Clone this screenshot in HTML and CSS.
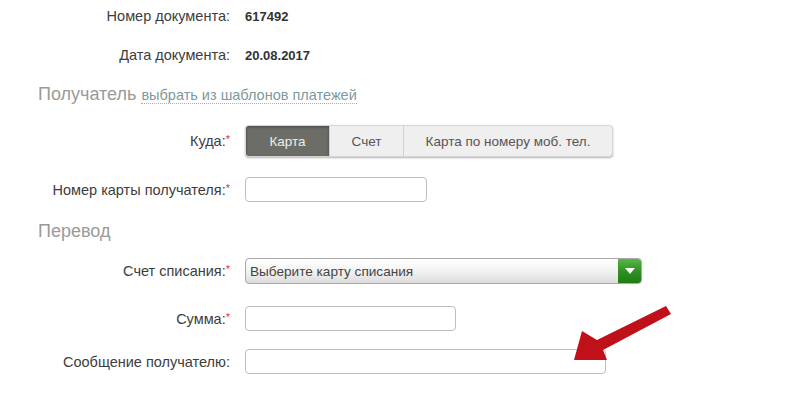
FILE: index.html
```html
<!DOCTYPE html>
<html lang="ru">
<head>
<meta charset="utf-8">
<title>Перевод</title>
<link rel="stylesheet" href="styles.css">
</head>
<body>
<div class="form">
  <div class="row r1">
    <div class="label">Номер документа:</div>
    <div class="value">617492</div>
  </div>
  <div class="row r2">
    <div class="label">Дата документа:</div>
    <div class="value">20.08.2017</div>
  </div>
  <div class="heading h1">Получатель <a class="tpl">выбрать из шаблонов платежей</a></div>
  <div class="row r3">
    <div class="label">Куда:<span class="req">*</span></div>
    <div class="seg">
      <span class="seg-item active s1">Карта</span>
      <span class="seg-item s2">Счет</span>
      <span class="seg-item s3">Карта по номеру моб. тел.</span>
    </div>
  </div>
  <div class="row r4">
    <div class="label">Номер карты получателя:<span class="req">*</span></div>
    <div class="input w-card"></div>
  </div>
  <div class="heading h2">Перевод</div>
  <div class="row r5">
    <div class="label">Счет списания:<span class="req">*</span></div>
    <div class="select">
      <span class="select-text">Выберите карту списания</span>
      <span class="select-btn"><svg width="10" height="6" viewBox="0 0 10 6"><path d="M0 0 H10 L5 6 Z" fill="#fff"/></svg></span>
    </div>
  </div>
  <div class="row r6">
    <div class="label">Сумма:<span class="req">*</span></div>
    <div class="input w-sum"></div>
  </div>
  <div class="row r7">
    <div class="label">Сообщение получателю:</div>
    <div class="input w-msg"></div>
  </div>
</div>
<svg class="arrow" width="120" height="75" viewBox="0 0 120 75">
  <polygon points="14,65 22,36 37,45 106,11 111,19 43,55 47,65" fill="#c0111a"/>
</svg>
</body>
</html>
```
FILE: styles.css
```css
html, body {
  margin: 0;
  padding: 0;
  background: #fff;
}
body {
  font-family: "Liberation Sans", Arial, sans-serif;
  color: #444;
  width: 800px;
  height: 400px;
  overflow: hidden;
  position: relative;
}
.form {
  display: flex;
  flex-direction: column;
}
.row {
  display: flex;
  align-items: center;
}
.label {
  width: 230px;
  flex: none;
  text-align: right;
  font-size: 14.5px;
  color: #3d3d3d;
  margin-right: 15px;
}
.req {
  color: #d9303a;
  font-size: 11px;
  vertical-align: 3px;
}
.value {
  font-size: 13px;
  font-weight: bold;
  color: #333;
}
.r1 { height: 32px; }
.r2 { height: 32px; margin-top: 7px; }
.heading {
  height: 24px;
  display: flex;
  align-items: center;
  padding-left: 38px;
  font-size: 18px;
  color: #9a9a9a;
}
.h1 { margin-top: 11px; }
.tpl {
  font-size: 14.5px;
  color: #7d9a9e;
  margin-left: 5px;
  border-bottom: 1px dotted #9ab3b6;
  line-height: 15px;
  margin-top: 3px;
}
.r3 { height: 32px; margin-top: 19px; }
.seg {
  display: flex;
  height: 32px;
  border-radius: 4px;
  background: #efefef;
  box-shadow: 0 1px 2px rgba(0,0,0,0.3);
  overflow: hidden;
  border: 1px solid #d6d6d6;
  box-sizing: border-box;
}
.seg-item {
  display: flex;
  align-items: center;
  justify-content: center;
  font-size: 13.5px;
  color: #555;
  border-left: 1px solid #d0d0d0;
}
.seg-item.active {
  background: #6d6d67;
  color: #eee;
  border-left: none;
  box-shadow: inset 0 1px 3px rgba(0,0,0,0.35);
}
.s1 { width: 83px; }
.s2 { width: 73px; }
.s3 { width: 208px; }
.r4 { height: 25px; margin-top: 20px; }
.input {
  height: 25px;
  box-sizing: border-box;
  border: 1px solid #b8c0c4;
  border-radius: 4px;
  background: #fff;
}
.w-card { width: 182px; }
.h2 { margin-top: 17px; }
.r5 { height: 26px; margin-top: 15px; }
.select {
  width: 397px;
  height: 26px;
  box-sizing: border-box;
  border: 1px solid #a9a9a9;
  border-radius: 4px;
  background: linear-gradient(#ffffff, #f3f3f3 50%, #dcdcdc);
  display: flex;
  align-items: center;
  overflow: hidden;
}
.select-text {
  flex: 1;
  font-size: 13.6px;
  color: #444;
  padding-left: 4px;
}
.select-btn {
  width: 23px;
  height: 100%;
  background: linear-gradient(#58b847, #2f9221 50%, #1f7c14);
  display: flex;
  align-items: center;
  justify-content: center;
}
.r6 { height: 25px; margin-top: 22px; }
.w-sum { width: 211px; }
.r7 { height: 25px; margin-top: 18px; }
.w-msg { width: 361px; }
.arrow {
  position: absolute;
  left: 560px;
  top: 295px;
}
```
